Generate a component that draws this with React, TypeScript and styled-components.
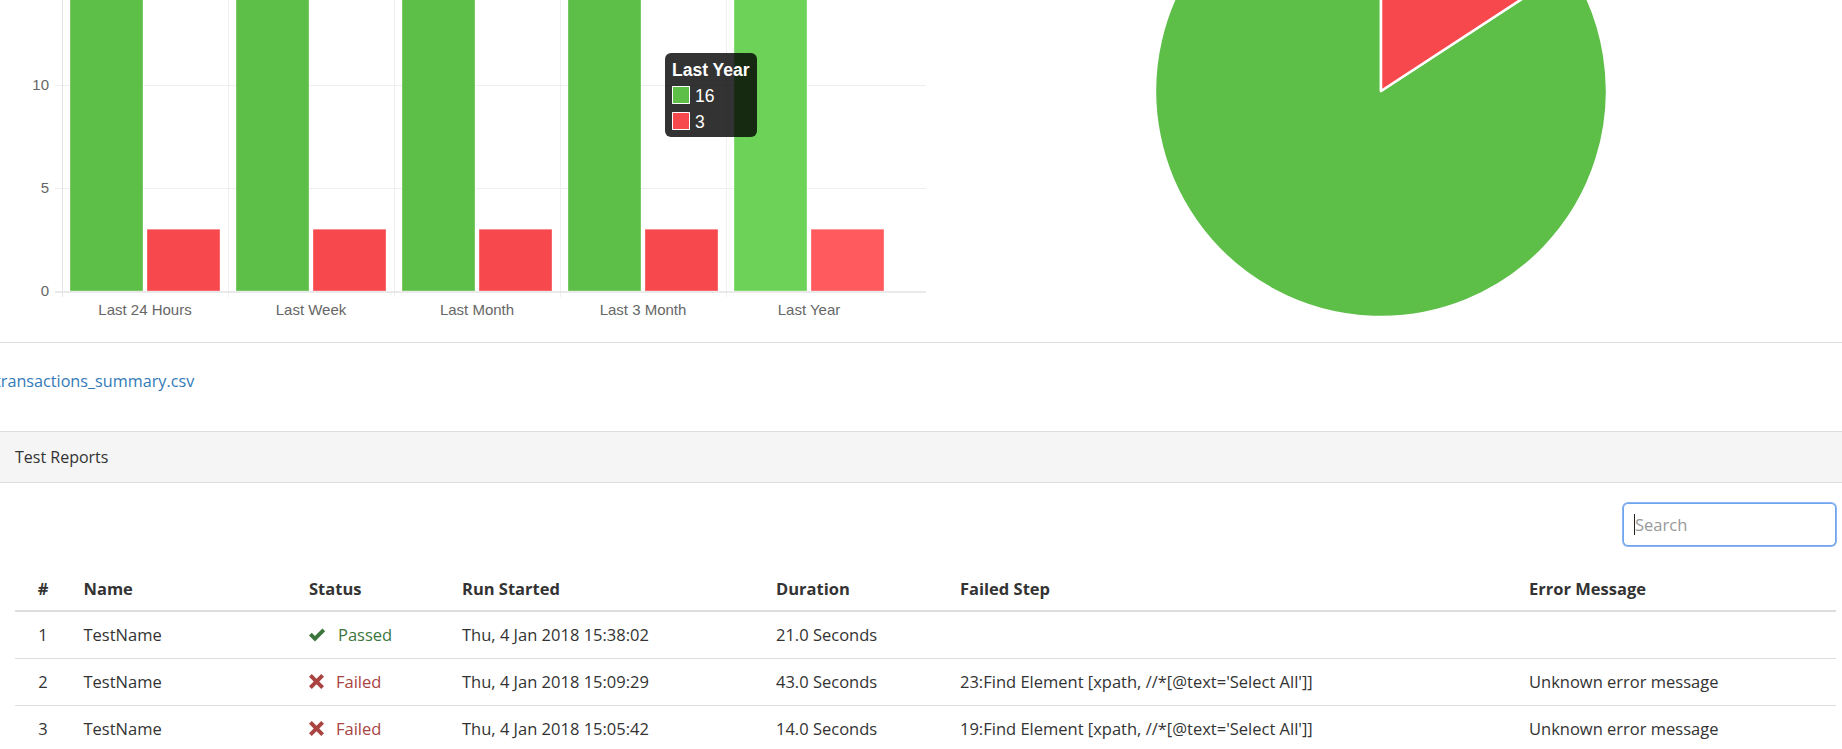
import React from 'react';
import styled, { createGlobalStyle } from 'styled-components';

const GlobalStyle = createGlobalStyle`
  html, body { margin: 0; padding: 0; background: #fff; overflow: hidden; }
  body { font-family: "Open Sans", "Noto Sans", Arial, sans-serif; color: #333; }
  * { box-sizing: border-box; }
`;

const Viewport = styled.div`
  width: 1842px;
  height: 749px;
  overflow: hidden;
`;

const Page = styled.div`
  width: 1859px;
  margin-left: -4px;
`;

const ChartRow = styled.div`
  display: grid;
  grid-template-columns: 930px 1fr;
  height: 343px;
  border-bottom: 1px solid #dcdcdc;
`;

const ChartCell = styled.div`
  height: 342px;
  overflow: hidden;
`;

const LinkRow = styled.div`
  padding: 26px 0 37px;
  font-size: 16.2px;
  line-height: 25px;
`;

const FileLink = styled.a`
  margin-left: -1px;
  color: #337ab7;
  text-decoration: none;
`;

const Panel = styled.section`
  border-top: 1px solid #ddd;
`;

const PanelHeading = styled.div`
  background: #f5f5f5;
  padding: 12.5px 19px;
  line-height: 25px;
  font-size: 16px;
  color: #333;
  border-bottom: 1px solid #ddd;
`;

const PanelBody = styled.div`
  padding: 20px 19px 0 19px;
`;

const FilterRow = styled.div`
  display: flex;
  justify-content: flex-end;
`;

const SearchBox = styled.div`
  position: relative;
  width: 213px;
  height: 43px;
`;

const SearchInput = styled.input`
  width: 100%;
  height: 100%;
  border: 1px solid #6fa4ee;
  border-radius: 5px;
  box-shadow: 0 0 0 1px #8ab4f2;
  padding: 0 11px;
  font: 16.5px "Open Sans", Arial, sans-serif;
  color: #555;
  outline: none;
  &::placeholder { color: #999; }
`;

const Caret = styled.span`
  position: absolute;
  left: 11px;
  top: 11px;
  width: 1px;
  height: 21px;
  background: #222;
`;

const Table = styled.table`
  width: 100%;
  margin-top: 20px;
  border-collapse: collapse;
  table-layout: fixed;
  font-size: 16.5px;
  line-height: 25px;
`;

const Th = styled.th<{ $center?: boolean }>`
  padding: 10px 12.5px 9px;
  text-align: ${p => (p.$center ? 'center' : 'left')};
  font-weight: 700;
  color: #333;
  border-bottom: 2px solid #ddd;
  white-space: nowrap;
`;

const Td = styled.td<{ $center?: boolean }>`
  padding: 10px 12.5px;
  text-align: ${p => (p.$center ? 'center' : 'left')};
  border-top: 1px solid #ddd;
  color: #333;
  white-space: nowrap;
`;

const Status = styled.span<{ $ok: boolean }>`
  display: inline-flex;
  align-items: center;
  gap: 12px;
  color: ${p => (p.$ok ? '#3c763d' : '#a94442')};
`;

/* ---------- charts ---------- */
const GREEN = '#5dbf48';
const RED = '#f7484d';
const GREEN_HI = '#6dd358';
const RED_HI = '#ff5a5e';

const OFF = 4; // svg x = screen x + OFF
const BASE = 291;
const UNIT = 20.6;
const CAT0 = 62;
const CATW = 166;
const cats = ['Last 24 Hours', 'Last Week', 'Last Month', 'Last 3 Month', 'Last Year'];
const passed = [16, 16, 16, 16, 16];
const failed = [3, 3, 3, 3, 3];
const yv = (v: number) => BASE - v * UNIT;

const ChartText = styled.text`
  font-family: "Liberation Sans", Arial, sans-serif;
  font-size: 15px;
  fill: #666;
`;

const TipText = styled.text<{ $bold?: boolean }>`
  font-family: "Liberation Sans", Arial, sans-serif;
  font-size: 17.5px;
  font-weight: ${p => (p.$bold ? 700 : 400)};
  fill: #fff;
`;

function BarChart() {
  const sx = (x: number) => x + OFF;
  return (
    <svg width={930} height={342}>
      {[15, 10, 5].map(v => (
        <line key={v} x1={sx(55)} x2={sx(926)} y1={yv(v) + 0.5} y2={yv(v) + 0.5} stroke="#efefef" />
      ))}
      {cats.map((_, i) => (
        <line key={i} x1={sx(CAT0 + i * CATW) + 0.5} x2={sx(CAT0 + i * CATW) + 0.5} y1={0} y2={297} stroke={i === 0 ? '#e3e3e3' : '#efefef'} />
      ))}
      {cats.map((_, i) => {
        const c = CAT0 + i * CATW;
        const hi = i === 4;
        return (
          <g key={i}>
            <rect x={sx(c + 8)} y={yv(passed[i])} width={73} height={BASE - yv(passed[i])} fill={hi ? GREEN_HI : GREEN} stroke="rgba(255,255,255,0.35)" strokeWidth={1} />
            <rect x={sx(c + 85)} y={yv(failed[i])} width={73} height={BASE - yv(failed[i])} fill={hi ? RED_HI : RED} stroke="rgba(255,255,255,0.35)" strokeWidth={1} />
          </g>
        );
      })}
      <line x1={sx(55)} x2={sx(926)} y1={BASE + 1} y2={BASE + 1} stroke="#e3e3e3" strokeWidth={1.5} />
      {[10, 5, 0].map(v => (
        <ChartText key={v} x={sx(49)} y={yv(v) + 5} textAnchor="end">{v}</ChartText>
      ))}
      {cats.map((c, i) => (
        <ChartText key={c} x={sx(CAT0 + i * CATW + 83)} y={315} textAnchor="middle">{c}</ChartText>
      ))}
      <g>
        <rect x={sx(665)} y={53} width={92} height={84} rx={6} fill="rgba(0,0,0,0.8)" />
        <TipText $bold x={sx(672)} y={75.5}>Last Year</TipText>
        <rect x={sx(672)} y={86} width={18} height={18} fill="#fff" />
        <rect x={sx(673)} y={87} width={16} height={16} fill={GREEN} />
        <TipText x={sx(695)} y={101.5}>16</TipText>
        <rect x={sx(672)} y={112} width={18} height={18} fill="#fff" />
        <rect x={sx(673)} y={113} width={16} height={16} fill={RED} />
        <TipText x={sx(695)} y={127.5}>3</TipText>
      </g>
    </svg>
  );
}

function PieChart() {
  const cx = 455;
  const cy = 91;
  const r = 226;
  const frac = 3 / 19;
  const a = -Math.PI / 2 + frac * 2 * Math.PI;
  const ex = cx + r * Math.cos(a);
  const ey = cy + r * Math.sin(a);
  const red = `M${cx},${cy} L${cx},${cy - r} A${r},${r} 0 0 1 ${ex},${ey} Z`;
  const green = `M${cx},${cy} L${ex},${ey} A${r},${r} 0 1 1 ${cx},${cy - r} Z`;
  return (
    <svg width={930} height={342}>
      <path d={green} fill={GREEN} stroke="#fff" strokeWidth={2.5} strokeLinejoin="round" />
      <path d={red} fill={RED} stroke="#fff" strokeWidth={2.5} strokeLinejoin="round" />
    </svg>
  );
}

function OkIcon() {
  return (
    <svg width={17} height={14} viewBox="0 0 16 13">
      <polygon points="0,7 2.6,4.4 5.6,7.4 12.6,0.4 15.2,3 5.6,12.6" fill="currentColor" />
    </svg>
  );
}

function RemoveIcon() {
  return (
    <svg width={15} height={15} viewBox="0 0 14 14">
      <polygon points="0,2.6 2.6,0 7,4.4 11.4,0 14,2.6 9.6,7 14,11.4 11.4,14 7,9.6 2.6,14 0,11.4 4.4,7" fill="currentColor" />
    </svg>
  );
}

type Row = { n: number; ok: boolean; started: string; dur: string; step: string; err: string };
const rows: Row[] = [
  { n: 1, ok: true, started: 'Thu, 4 Jan 2018 15:38:02', dur: '21.0 Seconds', step: '', err: '' },
  { n: 2, ok: false, started: 'Thu, 4 Jan 2018 15:09:29', dur: '43.0 Seconds', step: "23:Find Element [xpath, //*[@text='Select All']]", err: 'Unknown error message' },
  { n: 3, ok: false, started: 'Thu, 4 Jan 2018 15:05:42', dur: '14.0 Seconds', step: "19:Find Element [xpath, //*[@text='Select All']]", err: 'Unknown error message' },
];

export default function App() {
  return (
    <Viewport>
      <GlobalStyle />
      <Page>
        <ChartRow>
          <ChartCell><BarChart /></ChartCell>
          <ChartCell><PieChart /></ChartCell>
        </ChartRow>
        <LinkRow>
          <FileLink href="#">transactions_summary.csv</FileLink>
        </LinkRow>
        <Panel>
          <PanelHeading>Test Reports</PanelHeading>
          <PanelBody>
            <FilterRow>
              <SearchBox>
                <SearchInput placeholder="Search" />
                <Caret />
              </SearchBox>
            </FilterRow>
            <Table>
              <colgroup>
                <col style={{ width: 56 }} />
                <col style={{ width: 225.5 }} />
                <col style={{ width: 153 }} />
                <col style={{ width: 314 }} />
                <col style={{ width: 184 }} />
                <col style={{ width: 569 }} />
                <col />
              </colgroup>
              <thead>
                <tr>
                  <Th $center>#</Th>
                  <Th>Name</Th>
                  <Th>Status</Th>
                  <Th>Run Started</Th>
                  <Th>Duration</Th>
                  <Th>Failed Step</Th>
                  <Th>Error Message</Th>
                </tr>
              </thead>
              <tbody>
                {rows.map(r => (
                  <tr key={r.n}>
                    <Td $center>{r.n}</Td>
                    <Td>TestName</Td>
                    <Td>
                      <Status $ok={r.ok}>
                        {r.ok ? <OkIcon /> : <RemoveIcon />}
                        {r.ok ? 'Passed' : 'Failed'}
                      </Status>
                    </Td>
                    <Td>{r.started}</Td>
                    <Td>{r.dur}</Td>
                    <Td>{r.step}</Td>
                    <Td>{r.err}</Td>
                  </tr>
                ))}
              </tbody>
            </Table>
          </PanelBody>
        </Panel>
      </Page>
    </Viewport>
  );
}
